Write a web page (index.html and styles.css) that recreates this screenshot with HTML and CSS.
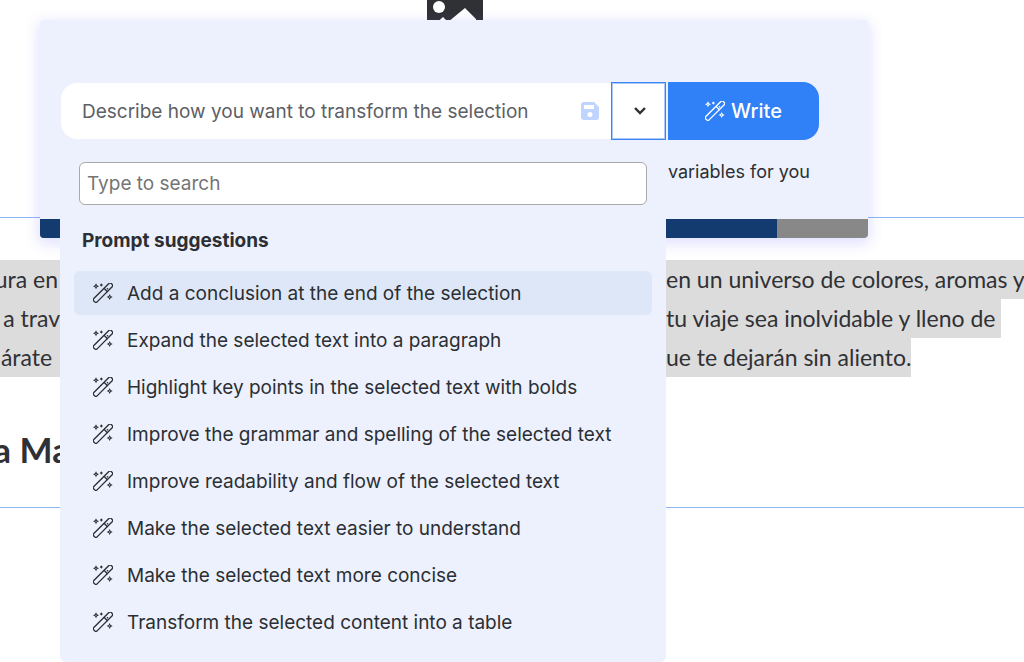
FILE: index.html
```html
<!DOCTYPE html>
<html lang="en">
<head>
  <meta charset="UTF-8" />
  <meta name="viewport" content="width=device-width, initial-scale=1.0" />
  <title>AI Writer</title>
  <link rel="stylesheet" href="styles.css">
</head>
<body>
  <svg class="sprite" aria-hidden="true">
    <symbol id="wand" viewBox="0 0 60 60">
      <g fill="none" stroke="currentColor" stroke-width="4" stroke-linejoin="round">
        <rect x="-7" y="22" width="74" height="14" rx="5" transform="rotate(-45 30 29)" />
        <path d="M33 16l11 11M42 16l3 3" />
      </g>
      <path fill="currentColor" fill-rule="evenodd" d="M9 1l3 6 6 3-6 3-3 6-3-6-6-3 6-3zM9 8l-2 2 2 2 2-2zM25 1l2 3 3 2-3 2-2 3-2-3-3-2 3-2zM50 33l3 6 6 3-6 3-3 6-3-6-6-3 6-3zM50 40l-2 2 2 2 2-2z" />
    </symbol>
  </svg>

  <main class="article">
    <section class="block block-image">
      <svg class="image-icon" viewBox="0 0 56 50" aria-hidden="true">
        <rect y="-6" width="56" height="50" rx="5" fill="#303135" />
        <circle cx="12" cy="7" r="6" fill="#fff" />
        <path d="M6 26l10-9 5 5L38 8l11 11v20H6z" fill="#fff" />
      </svg>
    </section>

    <section class="block block-text">
      <p class="line"><mark class="before">ura en</mark><mark class="after fill">en un universo de colores, aromas y</mark></p>
      <p class="line"><mark class="before clipped">a trav</mark><mark class="after">tu viaje sea inolvidable y lleno de </mark></p>
      <p class="line"><mark class="before">árate </mark><mark class="after">ue te dejarán sin aliento.</mark></p>
      <h2>a Ma</h2>
    </section>
  </main>

  <div class="panel">
    <form class="prompt">
      <div class="prompt-row">
        <div class="prompt-field">
          <input type="text" id="prompt" aria-label="Prompt" placeholder="Describe how you want to transform the selection">
          <button type="button" class="save" aria-label="Save prompt">
            <svg viewBox="0 0 18 18"><path fill="currentColor" fill-rule="evenodd" d="M3 0h10l5 5v10a3 3 0 0 1-3 3H3a3 3 0 0 1-3-3V3a3 3 0 0 1 3-3zM3 3v4h10V3zM9 10a2.5 2.5 0 1 0 0 5 2.5 2.5 0 0 0 0-5z" /></svg>
          </button>
        </div>
        <button type="button" class="toggle" aria-label="Prompt suggestions" aria-expanded="true">
          <svg viewBox="0 0 14 10"><path d="M2 2l5 5 5-5" fill="none" stroke="currentColor" stroke-width="2.4" /></svg>
        </button>
        <button type="submit" class="write"><svg class="wand"><use href="#wand" /></svg>Write</button>
      </div>
      <p class="hint">variables for you</p>
    </form>
    <div class="usage"><div class="usage-bar"></div></div>

    <div class="menu">
      <input type="search" class="search" aria-label="Search prompts" placeholder="Type to search">
      <h3>Prompt suggestions</h3>
      <ul>
        <li><button type="button" class="item active"><svg class="wand"><use href="#wand" /></svg>Add a conclusion at the end of the selection</button></li>
        <li><button type="button" class="item"><svg class="wand"><use href="#wand" /></svg>Expand the selected text into a paragraph</button></li>
        <li><button type="button" class="item"><svg class="wand"><use href="#wand" /></svg>Highlight key points in the selected text with bolds</button></li>
        <li><button type="button" class="item"><svg class="wand"><use href="#wand" /></svg>Improve the grammar and spelling of the selected text</button></li>
        <li><button type="button" class="item"><svg class="wand"><use href="#wand" /></svg>Improve readability and flow of the selected text</button></li>
        <li><button type="button" class="item"><svg class="wand"><use href="#wand" /></svg>Make the selected text easier to understand</button></li>
        <li><button type="button" class="item"><svg class="wand"><use href="#wand" /></svg>Make the selected text more concise</button></li>
        <li><button type="button" class="item"><svg class="wand"><use href="#wand" /></svg>Transform the selected content into a table</button></li>
      </ul>
    </div>
  </div>
</body>
</html>
```

FILE: styles.css
```css
* {
  box-sizing: border-box;
  margin: 0;
  padding: 0;
}

body {
  position: relative;
  min-height: 100vh;
  font-family: Inter, sans-serif;
  font-size: 19px;
  background: #fff;
  color: #2b2f33;
  overflow-x: hidden;
}

button,
input {
  font: inherit;
  color: inherit;
}

button {
  cursor: pointer;
}

.sprite {
  position: absolute;
  width: 0;
  height: 0;
}

.wand {
  width: 20px;
  height: 20px;
  flex: none;
}

/* article behind the panel */

.article {
  font-family: Lato, sans-serif;
  color: #303135;
}

.block {
  border-bottom: 1px solid #8db6f5;
}

.block-image {
  height: 218px;
  padding-right: 114px;
  text-align: center;
}

.image-icon {
  width: 56px;
  height: 50px;
}

.block-text {
  height: 290px;
  padding-top: 42px;
  overflow: hidden;
}

.line {
  display: grid;
  grid-template-columns: 60px 1fr 358px;
  font-size: 23px;
  line-height: 39px;
  white-space: pre;
}

.line mark {
  background: #dcdcdc;
  color: inherit;
}

.before {
  display: flex;
  justify-content: flex-end;
  padding-right: 2px;
}

.before.clipped {
  padding-right: 0;
}

.after {
  grid-column: 3;
  justify-self: start;
}

.after.fill {
  justify-self: stretch;
}

.block-text h2 {
  display: flex;
  justify-content: flex-end;
  width: 70px;
  margin-top: 50px;
  font-size: 35px;
  font-weight: 700;
  line-height: 44px;
  white-space: pre;
}

/* floating writer panel */

.panel {
  position: absolute;
  top: 20px;
  left: 40px;
  right: 156px;
  background: #edf1fd;
  border-radius: 4px;
  box-shadow: 0 4px 14px 2px rgba(90, 90, 255, 0.18);
}

.prompt {
  height: 199px;
  padding: 62px 49px 0 21px;
}

.prompt-row {
  display: flex;
  align-items: center;
}

.prompt-field {
  display: flex;
  align-items: center;
  flex: 1;
  height: 56px;
  padding: 0 12px 0 21px;
  background: #fff;
  border-radius: 16px 0 0 16px;
}

.prompt-field input {
  flex: 1;
  min-width: 0;
  border: none;
  outline: none;
  background: none;
}

.prompt-field input::placeholder {
  color: #5d6065;
  opacity: 1;
}

.save {
  width: 18px;
  height: 18px;
  border: none;
  background: none;
  color: #bfd4fe;
}

.save svg {
  display: block;
}

.toggle {
  display: flex;
  align-items: center;
  justify-content: center;
  width: 55px;
  height: 58px;
  padding-left: 3px;
  border: 1px solid #3b82f6;
  box-shadow: inset 0 0 0 1px #a9c9fb;
  background: #fff;
}

.toggle svg {
  width: 14px;
  height: 10px;
}

.write {
  display: flex;
  align-items: center;
  justify-content: center;
  gap: 6px;
  width: 151px;
  height: 58px;
  margin-left: 2px;
  border: none;
  border-radius: 0 16px 16px 0;
  background: #3080f8;
  color: #fff;
  font-size: 20px;
  font-weight: 500;
}

.hint {
  margin: 20px 9px 0 0;
  font-size: 18px;
  line-height: 24px;
  text-align: right;
}

.usage {
  height: 19px;
  border-radius: 0 0 4px 4px;
  background: #888;
  overflow: hidden;
}

.usage-bar {
  width: 89%;
  height: 100%;
  background: #143b6f;
}

/* suggestions menu */

.menu {
  position: absolute;
  top: 120px;
  left: 20px;
  right: 202px;
  padding: 22px 14px 18px;
  background: #edf1fd;
  border-radius: 0 0 6px 6px;
}

.search {
  display: block;
  width: calc(100% - 10px);
  height: 43px;
  margin-left: 5px;
  padding: 0 7px;
  border: 1px solid #a9a9a9;
  border-radius: 6px;
  background: #fff;
  appearance: none;
}

.search::placeholder {
  color: #757575;
}

.menu h3 {
  margin: 24px 8px 18px;
  font-size: 19px;
  font-weight: 700;
  line-height: 24px;
}

.menu ul {
  display: flex;
  flex-direction: column;
  gap: 3px;
  list-style: none;
}

.item {
  display: flex;
  align-items: center;
  gap: 14px;
  width: 100%;
  height: 44px;
  padding: 0 19px;
  border: none;
  border-radius: 6px;
  background: none;
  text-align: left;
  white-space: nowrap;
}

.item.active,
.item:hover {
  background: #dee7f7;
}
```
